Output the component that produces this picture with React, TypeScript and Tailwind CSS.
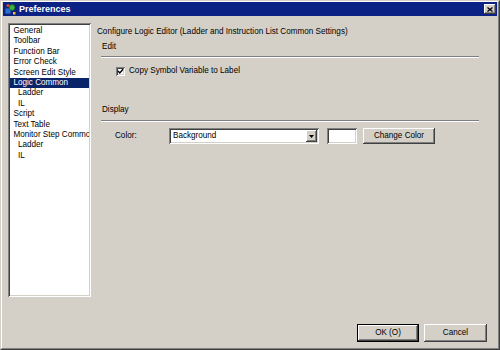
import React from "react";

const font = { fontFamily: '"Liberation Sans", Arial, sans-serif' };

const raised =
  "bg-[#d4d0c8] shadow-[inset_-1px_-1px_#404040,inset_1px_1px_#ffffff,inset_-2px_-2px_#808080,inset_2px_2px_#d4d0c8]";
const sunken =
  "bg-white shadow-[inset_1px_1px_#808080,inset_-1px_-1px_#ffffff,inset_2px_2px_#404040,inset_-2px_-2px_#d4d0c8]";

const items = [
  { label: "General", indent: false },
  { label: "Toolbar", indent: false },
  { label: "Function Bar", indent: false },
  { label: "Error Check", indent: false },
  { label: "Screen Edit Style", indent: false },
  { label: "Logic Common", indent: false, selected: true },
  { label: "Ladder", indent: true },
  { label: "IL", indent: true },
  { label: "Script", indent: false },
  { label: "Text Table", indent: false },
  { label: "Monitor Step Common", indent: false },
  { label: "Ladder", indent: true },
  { label: "IL", indent: true },
];

function AppIcon() {
  return (
    <svg width="12" height="12" viewBox="0 0 12 12">
      <rect x="1" y="5" width="6" height="6" fill="#2a6fd6" stroke="#0a2a6a" strokeWidth="0.8" />
      <circle cx="8" cy="4.5" r="3" fill="#3cb043" stroke="#0e5a1a" strokeWidth="0.8" />
      <circle cx="4" cy="2.5" r="1.6" fill="#e04030" />
      <rect x="9" y="9" width="2.5" height="2.5" fill="#f0c020" />
    </svg>
  );
}

function Etched({ className = "" }: { className?: string }) {
  return (
    <div className={`h-[2px] border-t border-t-[#808080] border-b border-b-white ${className}`} />
  );
}

export default function App() {
  return (
    <div
      className="w-[500px] h-[350px] bg-[#d4d0c8] border border-t-[#d4d0c8] border-l-[#d4d0c8] border-b-[#404040] border-r-[#404040] text-[8.15px] text-black"
      style={font}
    >
      <div className="h-full flex flex-col border border-t-white border-l-white border-b-[#808080] border-r-[#808080] px-px pb-px">
        {/* Title bar */}
        <div className="h-[14px] bg-[#0b2183] flex items-center pl-[1px] pr-[1px]">
          <AppIcon />
          <span className="ml-[3px] text-white font-bold text-[9px] leading-none">Preferences</span>
          <div className={`ml-auto w-[12px] h-[10px] flex items-center justify-center ${raised}`}>
            <svg width="6" height="5" viewBox="0 0 6 5">
              <path d="M0.5 0.5 L5.5 4.5 M5.5 0.5 L0.5 4.5" stroke="#000" strokeWidth="1.3" />
            </svg>
          </div>
        </div>

        {/* Body */}
        <div className="flex-1 flex flex-col px-[5px] pt-[7px] pb-[5px]">
          <div className="flex h-[274px]">
            {/* Tree / list */}
            <div className={`w-[83px] h-full p-[2px] overflow-hidden ${sunken}`}>
              <div className="pt-px">
                {items.map((it, i) => (
                  <div
                    key={i}
                    className={`h-[10.4px] leading-[10.4px] whitespace-nowrap overflow-hidden ${
                      it.indent ? "pl-[8px]" : "pl-[3.5px]"
                    } ${it.selected ? "bg-[#0a246a] text-white" : ""}`}
                  >
                    {it.label}
                  </div>
                ))}
              </div>
            </div>

            {/* Settings panel */}
            <div className="ml-[6px] flex-1 flex flex-col pt-[4px]">
              <div className="leading-[10px] whitespace-nowrap">
                Configure Logic Editor (Ladder and Instruction List Common Settings)
              </div>

              <div className="mt-[5px] pl-[5px] leading-[10px]">Edit</div>
              <Etched className="mt-[4px] ml-[4px] w-[378px]" />

              <div className="mt-[8px] ml-[19px] flex items-center">
                <div className={`w-[9px] h-[9px] flex items-center justify-center ${sunken}`}>
                  <svg width="7" height="7" viewBox="0 0 7 7">
                    <path d="M1 3 L2.8 5 L6 1.2" fill="none" stroke="#000" strokeWidth="1.4" />
                  </svg>
                </div>
                <span className="ml-[4px] leading-[10px]">Copy Symbol Variable to Label</span>
              </div>

              <div className="mt-[29px] pl-[5px] leading-[10px]">Display</div>
              <Etched className="mt-[5px] ml-[4px] w-[378px]" />

              <div className="mt-[6px] flex items-center h-[16px]">
                <span className="ml-[18px] w-[54px] leading-[10px]">Color:</span>
                <div className={`w-[150px] h-[16px] flex items-center p-[2px] ${sunken}`}>
                  <span className="pl-[2px] flex-1 leading-[10px]">Background</span>
                  <div className={`w-[11px] h-[12px] flex items-center justify-center ${raised}`}>
                    <svg width="5" height="3" viewBox="0 0 5 3">
                      <path d="M0 0 H5 L2.5 3 Z" fill="#000" />
                    </svg>
                  </div>
                </div>
                <div className={`ml-[8px] w-[30px] h-[16px] ${sunken}`} />
                <div className={`ml-[6px] w-[72px] h-[16px] flex items-center justify-center ${raised}`}>
                  Change Color
                </div>
              </div>
            </div>
          </div>

          {/* Footer buttons */}
          <div className="mt-auto flex justify-end gap-[5px] pr-[5px]">
            <div className="w-[62px] h-[18px] border border-black">
              <div className={`w-full h-full flex items-center justify-center ${raised}`}>OK (O)</div>
            </div>
            <div className={`w-[63px] h-[18px] flex items-center justify-center ${raised}`}>Cancel</div>
          </div>
        </div>
      </div>
    </div>
  );
}
